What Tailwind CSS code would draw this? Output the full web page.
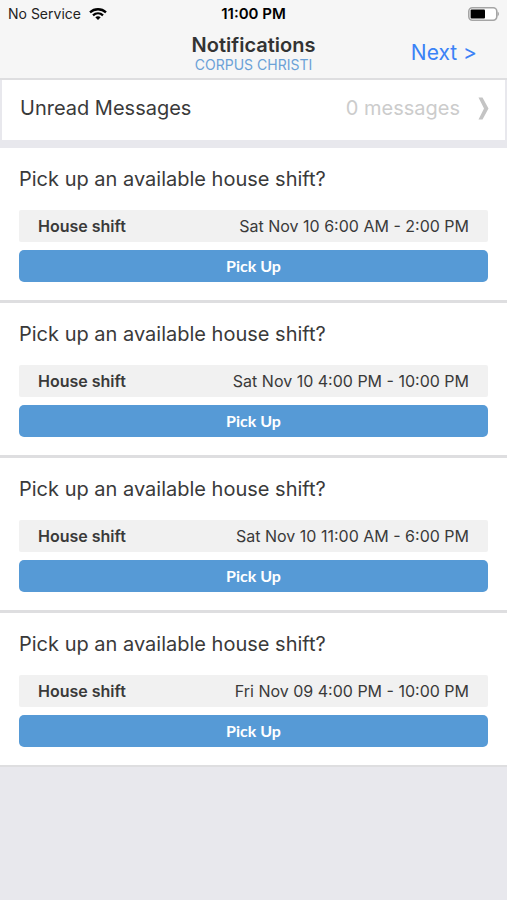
<!DOCTYPE html>
<html lang="en">

<head>
  <meta charset="UTF-8">
  <meta name="viewport" content="width=device-width, initial-scale=1.0">
  <title>Notifications</title>
  <script src="https://cdn.jsdelivr.net/npm/@tailwindcss/browser@4"></script>
</head>

<body class="min-h-screen bg-[#e8e8ed] font-['Inter','Liberation_Sans',sans-serif] text-[#3a3a3a]">
  <!-- Header -->
  <header class="bg-[#f6f6f6] border-b-2 border-[#dedee0]">
    <!-- Status bar -->
    <div class="grid grid-cols-[1fr_auto_1fr] items-center h-7 px-2 text-sm text-[#222]">
      <div class="flex items-center gap-2">
        <span>No Service</span>
        <svg class="w-[18px] h-3" viewBox="0 0 18 12" fill="none" stroke="#000" stroke-width="2.3" aria-hidden="true">
          <path d="M1 4.4C5.6 0.2 12.4 0.2 17 4.4" />
          <path d="M4 7.4C6.9 4.8 11.1 4.8 14 7.4" />
          <path d="M9 12L6.3 9.3C7.9 8 10.1 8 11.7 9.3Z" fill="#000" stroke="none" />
        </svg>
      </div>
      <span class="text-center text-[15px] font-semibold text-black">11:00 PM</span>
      <svg class="w-8 h-[14px] justify-self-end" viewBox="0 0 32 14" aria-hidden="true">
        <rect x="1.8" y="0.8" width="28" height="12.4" rx="3.6" fill="#fff" stroke="#a5a5a5" stroke-width="1.6" />
        <rect x="3.6" y="2.6" width="14.4" height="8.8" rx="1" fill="#000" />
        <path d="M30.6 4.8C32.4 5.4 32.4 8.6 30.6 9.2Z" fill="#a5a5a5" />
      </svg>
    </div>
    <!-- Title bar -->
    <div class="grid grid-cols-[1fr_auto_1fr] items-center h-[50px] px-[30px]">
      <div class="col-start-2 text-center">
        <h1 class="text-xl leading-6 font-semibold text-[#333]">Notifications</h1>
        <p class="text-sm leading-4 text-[#6ba1d6]">CORPUS CHRISTI</p>
      </div>
      <a href="#" class="justify-self-end text-[21px] text-[#3b82f6]">Next &gt;</a>
    </div>
  </header>

  <main>
    <!-- Unread messages -->
    <a href="#" class="flex items-center h-15 mx-[2px] mb-2 pl-[18px] pr-4 pb-1 bg-white text-xl">
      <span>Unread Messages</span>
      <span class="ml-auto text-[#ccc]">0 messages</span>
      <svg class="w-[11px] h-[23px] ml-[18px]" viewBox="0 0 11 23" fill="#c4c4c4" aria-hidden="true">
        <path d="M0.5 0.5H4.5L10.5 11.5L4.5 22.5H0.5L6 11.5Z" />
      </svg>
    </a>

    <!-- Available shifts -->
    <section class="px-[19px] pt-4 pb-[18px] bg-white border-b-3 border-[#dedee0]">
      <h2 class="text-xl leading-[30px]">Pick up an available house shift?</h2>
      <div class="flex items-center justify-between h-8 mt-4 px-[19px] bg-[#f1f1f1] rounded-xs">
        <span class="font-semibold">House shift</span>
        <span>Sat Nov 10 6:00 AM - 2:00 PM</span>
      </div>
      <button type="button" class="block w-full h-8 mt-2 bg-[#569ad6] rounded-[5px] font-['Lato','Liberation_Sans',sans-serif] font-bold text-white">Pick Up</button>
    </section>
    <section class="px-[19px] pt-4 pb-[18px] bg-white border-b-3 border-[#dedee0]">
      <h2 class="text-xl leading-[30px]">Pick up an available house shift?</h2>
      <div class="flex items-center justify-between h-8 mt-4 px-[19px] bg-[#f1f1f1] rounded-xs">
        <span class="font-semibold">House shift</span>
        <span>Sat Nov 10 4:00 PM - 10:00 PM</span>
      </div>
      <button type="button" class="block w-full h-8 mt-2 bg-[#569ad6] rounded-[5px] font-['Lato','Liberation_Sans',sans-serif] font-bold text-white">Pick Up</button>
    </section>
    <section class="px-[19px] pt-4 pb-[18px] bg-white border-b-3 border-[#dedee0]">
      <h2 class="text-xl leading-[30px]">Pick up an available house shift?</h2>
      <div class="flex items-center justify-between h-8 mt-4 px-[19px] bg-[#f1f1f1] rounded-xs">
        <span class="font-semibold">House shift</span>
        <span>Sat Nov 10 11:00 AM - 6:00 PM</span>
      </div>
      <button type="button" class="block w-full h-8 mt-2 bg-[#569ad6] rounded-[5px] font-['Lato','Liberation_Sans',sans-serif] font-bold text-white">Pick Up</button>
    </section>
    <section class="px-[19px] pt-4 pb-[18px] bg-white border-b-2 border-[#dedee0]">
      <h2 class="text-xl leading-[30px]">Pick up an available house shift?</h2>
      <div class="flex items-center justify-between h-8 mt-4 px-[19px] bg-[#f1f1f1] rounded-xs">
        <span class="font-semibold">House shift</span>
        <span>Fri Nov 09 4:00 PM - 10:00 PM</span>
      </div>
      <button type="button" class="block w-full h-8 mt-2 bg-[#569ad6] rounded-[5px] font-['Lato','Liberation_Sans',sans-serif] font-bold text-white">Pick Up</button>
    </section>
  </main>
</body>

</html>
